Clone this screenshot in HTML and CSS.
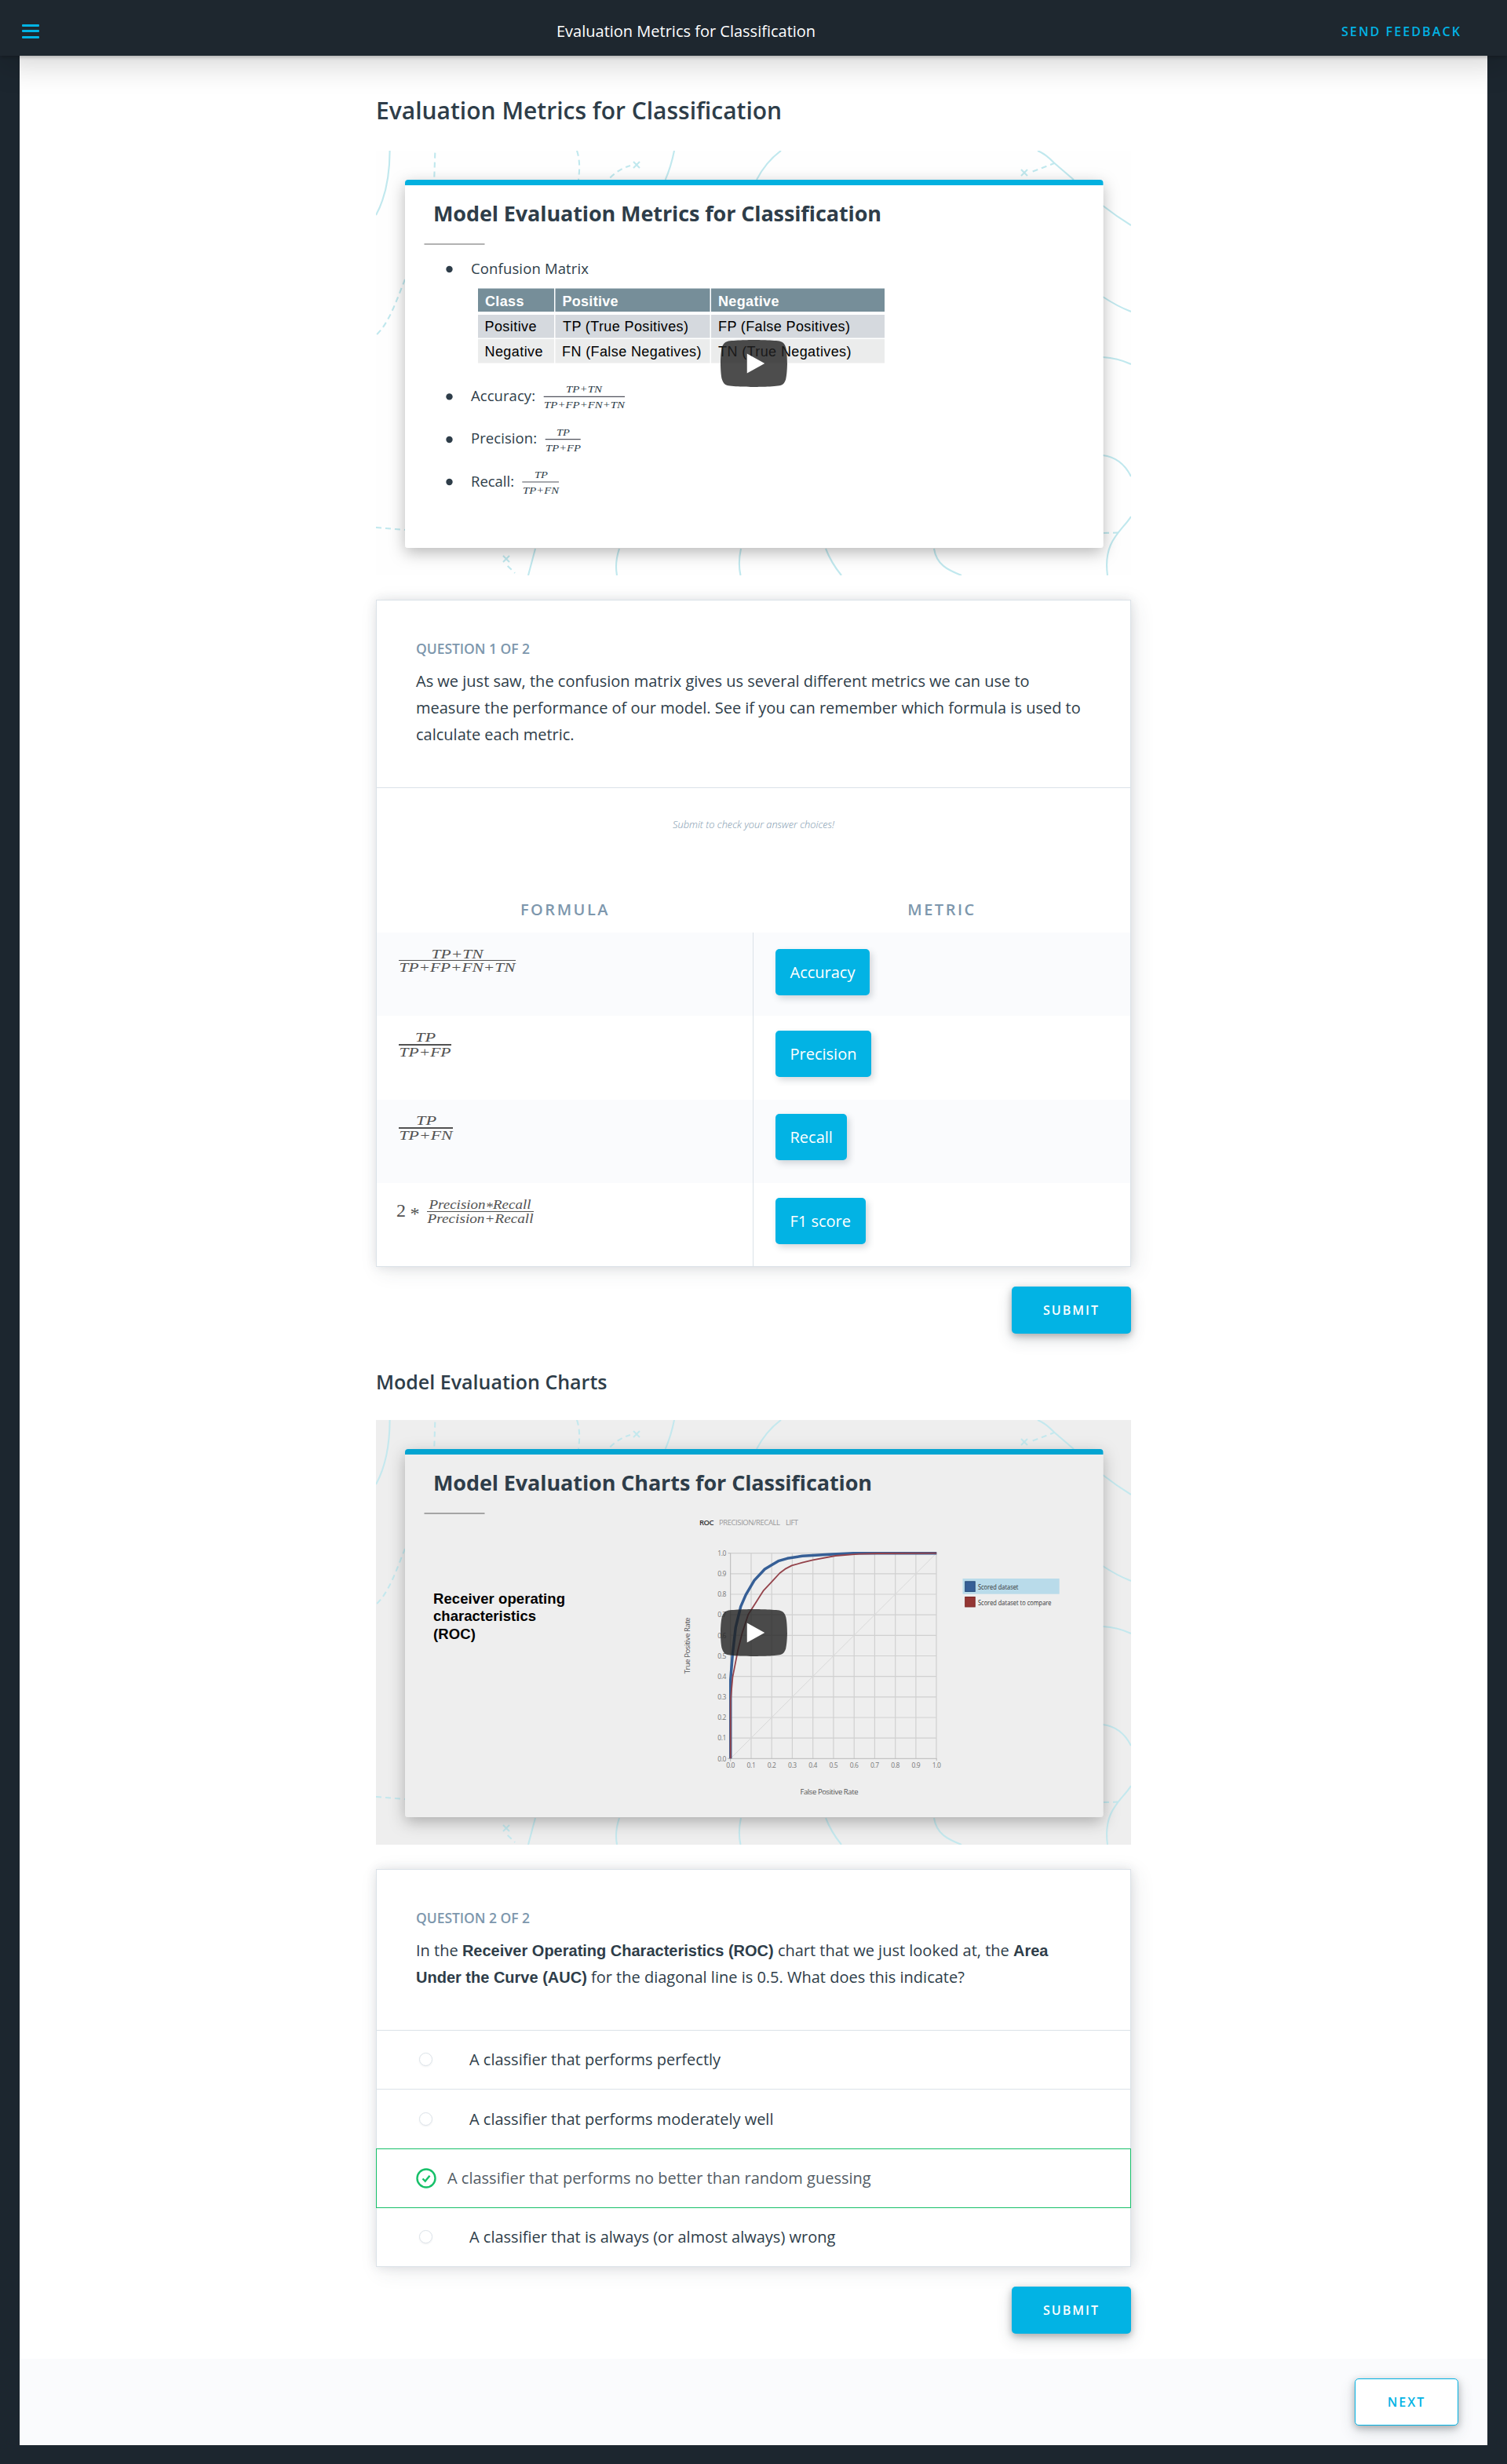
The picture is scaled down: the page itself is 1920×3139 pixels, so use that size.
FILE: index.html
```html
<!DOCTYPE html>
<html lang="en">
<head>
<meta charset="utf-8">
<title>Evaluation Metrics for Classification</title>
<link rel="stylesheet" href="styles.css">
</head>
<body>
<header class="topbar">
  <button class="menu" aria-label="Menu"><span></span><span></span><span></span></button>
  <div class="topbar-title">Evaluation Metrics for Classification</div>
  <a class="feedback">SEND FEEDBACK</a>
</header>

<svg class="defs" width="0" height="0" aria-hidden="true">
  <defs>
    <g id="map" fill="none" stroke="#c0e8ee" stroke-width="2.1">
      <path d="M17.6 0C17.5 33 12 60 0 82M380 0Q376 20 368.700 37M516 0Q497 14 485 37M843 0Q853 4 864 15.500L889 37M926 70Q944 84 962 95M926 186Q944 198 962 205M926 263Q945 264 962 272M926 388Q950 391 962 415M962 466C950 485 926 497 932 541M203 507L194 541M310 507Q304 525 307 541M465 507Q461 525 464.500 541M573 507Q580 525 593 541M711 507C714 527 728 534 746 541"/>
      <path stroke-dasharray="7 5" d="M75.300 2.600L74.300 34M256 0Q261 14 258 37M298.300 34.400Q310 23 324 19M836.700 26.600L864 16M37 164C27 188 17 220 0 235M0 480L37 483M167.700 529L177 538M927 487L948 486.600"/>
      <path d="M328 14l8 8m0-8l-8 8M822 24l8 8m0-8l-8 8M162 516l8 8m0-8l-8 8"/>
    </g>
    <g id="play">
      <path fill="#212121" fill-opacity=".8" d="M66.520 7.740c-.78-2.930-2.490-5.410-5.420-6.190C55.790.13 34 0 34 0S12.210.13 6.900 1.550C3.970 2.330 2.270 4.810 1.480 7.740.06 13.050 0 24 0 24s.06 10.950 1.480 16.260c.78 2.930 2.490 5.410 5.420 6.190C12.210 47.870 34 48 34 48s21.790-.13 27.100-1.550c2.930-.78 4.640-3.260 5.420-6.190C67.940 34.950 68 24 68 24s-.06-10.950-1.480-16.260z"/>
      <path fill="#fff" d="M45 24L27 14v20z"/>
    </g>
    <filter id="lift" x="-10%" y="-10%" width="120%" height="125%">
      <feDropShadow dx="0" dy="6" stdDeviation="10" flood-color="#000" flood-opacity=".28"/>
    </filter>
  </defs>
</svg>

<main class="page">
  <div class="content">
    <h1>Evaluation Metrics for Classification</h1>

    <svg class="video" viewBox="0 0 962 541">
      <rect width="962" height="541" fill="#fefefe"/>
      <use href="#map"/>
      <rect x="37" y="37" width="889.500" height="469" rx="4" fill="#fff" filter="url(#lift)"/>
      <path d="M37 44v-3q0-4 4-4h881.500q4 0 4 4v3z" fill="#03b0df"/>
      <text class="slide-title" x="73" y="89.500" textLength="571">Model Evaluation Metrics for Classification</text>
      <path d="M61.500 119h77" stroke="#999" stroke-width="1.600"/>
      <g fill="#2e3d49"><circle cx="93.500" cy="151" r="4.200"/><circle cx="93.500" cy="313.400" r="4.200"/><circle cx="93.500" cy="368" r="4.200"/><circle cx="93.500" cy="422" r="4.200"/></g>
      <g class="slide-text">
        <text x="121" y="156.600" textLength="150">Confusion Matrix</text>
        <text x="121" y="319" textLength="82">Accuracy:</text>
        <text x="121" y="373.400" textLength="84">Precision:</text>
        <text x="121" y="427.600" textLength="55">Recall:</text>
      </g>
      <path fill="#768e99" d="M130 175.500h97v29.500h-97zM228.500 175.500h197v29.500h-197zM427 175.500h221v29.500h-221z"/>
      <path fill="#d5d9de" d="M130 209h97v29.400h-97zM228.500 209h197v29.400h-197zM427 209h221v29.400h-221z"/>
      <path fill="#ebecec" d="M130 240h97v30.500h-97zM228.500 240h197v30.500h-197zM427 240h221v30.500h-221z"/>
      <g class="slide-table">
        <g font-weight="700" fill="#fff">
          <text x="139" y="197.500" textLength="49.500">Class</text>
          <text x="237.500" y="197.500" textLength="71">Positive</text>
          <text x="436" y="197.500" textLength="77.500">Negative</text>
        </g>
        <text x="138.500" y="229.800" textLength="66">Positive</text>
        <text x="238" y="229.800" textLength="160">TP (True Positives)</text>
        <text x="436" y="229.800" textLength="168">FP (False Positives)</text>
        <text x="138.500" y="261.800" textLength="74">Negative</text>
        <text x="237" y="261.800" textLength="177.500">FN (False Negatives)</text>
        <text x="436" y="261.800" textLength="169.500">TN (True Negatives)</text>
      </g>
      <g class="slide-math">
        <text x="242" y="308" textLength="46" lengthAdjust="spacingAndGlyphs">TP+TN</text><text x="214" y="328" textLength="103" lengthAdjust="spacingAndGlyphs">TP+FP+FN+TN</text>
        <text x="230" y="362.600" textLength="17" lengthAdjust="spacingAndGlyphs">TP</text><text x="216" y="382.600" textLength="45" lengthAdjust="spacingAndGlyphs">TP+FP</text>
        <text x="202" y="417" textLength="17" lengthAdjust="spacingAndGlyphs">TP</text><text x="187" y="437" textLength="46" lengthAdjust="spacingAndGlyphs">TP+FN</text>
      </g>
      <path stroke="#50525c" stroke-width="1.200" d="M213.700 313.400H317M215.700 367.600H260.700M186.300 422H233"/>
      <use href="#play" transform="translate(439 241) scale(1.25)"/>
    </svg>

    <section class="card">
      <div class="question">
        <h3>QUESTION 1 OF 2</h3>
        <p>As we just saw, the confusion matrix gives us several different metrics we can use to measure the performance of our model. See if you can remember which formula is used to calculate each metric.</p>
      </div>
      <p class="hint">Submit to check your answer choices!</p>
      <div class="match">
        <div class="match-head">FORMULA</div>
        <div class="match-head">METRIC</div>
        <div class="cell formula shade">
          <svg width="200" height="60" aria-label="Accuracy formula"><text x="59.500" y="22.500" textLength="66" lengthAdjust="spacingAndGlyphs">TP+TN</text><rect x="18" y="25" width="149" height="1"/><text x="18.500" y="40" textLength="148" lengthAdjust="spacingAndGlyphs">TP+FP+FN+TN</text></svg>
        </div>
        <div class="cell answer first shade"><span class="chip">Accuracy</span></div>
        <div class="cell formula tall">
          <svg width="200" height="60" aria-label="Precision formula"><text x="39" y="23" textLength="26" lengthAdjust="spacingAndGlyphs">TP</text><rect x="18" y="26" width="67" height="2"/><text x="18.500" y="42" textLength="66" lengthAdjust="spacingAndGlyphs">TP+FP</text></svg>
        </div>
        <div class="cell answer tall"><span class="chip">Precision</span></div>
        <div class="cell formula shade">
          <svg width="200" height="60" aria-label="Recall formula"><text x="40" y="22" textLength="26" lengthAdjust="spacingAndGlyphs">TP</text><rect x="18" y="25" width="69" height="2"/><text x="18.500" y="41" textLength="68" lengthAdjust="spacingAndGlyphs">TP+FN</text></svg>
        </div>
        <div class="cell answer raised shade"><span class="chip">Recall</span></div>
        <div class="cell formula">
          <svg width="220" height="60" aria-label="F1 formula"><text class="big" x="15" y="33">2</text><text class="big" x="32.500" y="37">*</text><text x="56.500" y="22.500" textLength="130" lengthAdjust="spacingAndGlyphs">Precision<tspan dy="3">*</tspan><tspan dy="-3">Recall</tspan></text><rect x="54" y="26" width="136" height="1"/><text x="54.500" y="41" textLength="135" lengthAdjust="spacingAndGlyphs">Precision+Recall</text></svg>
        </div>
        <div class="cell answer"><span class="chip">F1 score</span></div>
      </div>
    </section>
    <button class="btn">SUBMIT</button>

    <h2>Model Evaluation Charts</h2>

    <svg class="video" viewBox="0 0 962 541">
      <rect width="962" height="541" fill="#eee"/>
      <use href="#map" opacity=".9"/>
      <rect x="37" y="37" width="889.500" height="469" rx="4" fill="#eee" filter="url(#lift)"/>
      <path d="M37 44v-3q0-4 4-4h881.500q4 0 4 4v3z" fill="#04a4d1"/>
      <text class="slide-title" x="73" y="89.500" textLength="559">Model Evaluation Charts for Classification</text>
      <path d="M61.500 119h77" stroke="#8c8c8c" stroke-width="1.600"/>
      <g class="slide-label">
        <text x="73" y="233.500" textLength="168">Receiver operating</text>
        <text x="73" y="256" textLength="131">characteristics</text>
        <text x="73" y="278.500" textLength="54">(ROC)</text>
      </g>
      <g class="chart-text">
        <text x="412" y="134" textLength="18.500" fill="#333" font-weight="600">ROC</text>
        <text x="437" y="134" textLength="78" fill="#999">PRECISION/RECALL</text>
        <text x="522" y="134" textLength="16" fill="#999">LIFT</text>
        <text x="540.500" y="477.300" textLength="74">False Positive Rate</text>
        <text transform="translate(400 323.300) rotate(-90)" textLength="72">True Positive Rate</text>
      </g>
      <path fill="none" stroke="#d0d0d0" stroke-width="1.200" d="M451.700 169.700H714M451.700 195.900H714M451.700 222H714M451.700 248.200H714M451.700 274.300H714M451.700 300.500H714M451.700 326.700H714M451.700 352.800H714M451.700 379H714M451.700 405.100H714M478 169.700V431M504.200 169.700V431M530.400 169.700V431M556.700 169.700V431M582.900 169.700V431M609.200 169.700V431M635.400 169.700V431M661.700 169.700V431M687.900 169.700V431M714 169.700V431"/>
      <path fill="none" stroke="#d8d8d8" d="M451.700 431.300L714 169.700"/>
      <path fill="none" stroke="#b8b8b8" d="M448.500 169.700h3.200V431.300M448 431.300H714.200M714.200 431v3M451.700 431v4"/>
      <g class="chart-ticks" text-anchor="end">
        <text x="446" y="172.900">1.0</text><text x="446" y="199.100">0.9</text><text x="446" y="225.200">0.8</text><text x="446" y="251.400">0.7</text><text x="446" y="277.500">0.6</text><text x="446" y="303.700">0.5</text><text x="446" y="329.900">0.4</text><text x="446" y="356">0.3</text><text x="446" y="382.200">0.2</text><text x="446" y="408.300">0.1</text><text x="446" y="434.500">0.0</text>
      </g>
      <g class="chart-ticks" text-anchor="middle">
        <text x="451.700" y="443.300">0.0</text><text x="478" y="443.300">0.1</text><text x="504.200" y="443.300">0.2</text><text x="530.400" y="443.300">0.3</text><text x="556.700" y="443.300">0.4</text><text x="582.900" y="443.300">0.5</text><text x="609.200" y="443.300">0.6</text><text x="635.400" y="443.300">0.7</text><text x="661.700" y="443.300">0.8</text><text x="687.900" y="443.300">0.9</text><text x="714.200" y="443.300">1.0</text>
      </g>
      <g transform="translate(371 91) scale(.38266 .33333)" fill="none" stroke-linejoin="round">
        <path class="curve" stroke="#365f96" stroke-width="3.500" d="M211 1021L211 720L218 620L228 520L245 440L262 395L290 340L325 297L350 280L370 266L400 256L450 247L550 240L620 236L897 236"/>
        <path class="curve" stroke="#93424a" stroke-width="1.800" d="M211 1021L211 800L218 710L235 610L250 540L270 470L295 425L320 380L350 343L375 312L395 295L415 283L450 272L485 262L560 246L640 239L700 237L897 236"/>
      </g>
      <rect x="747.500" y="202" width="123.200" height="19.700" fill="#b9dbea"/>
      <rect x="750.700" y="205.800" width="12.500" height="12.700" fill="#365f96" stroke="#284c7b"/>
      <rect x="750.700" y="225.500" width="12.500" height="12.500" fill="#943634" stroke="#7c2826"/>
      <g class="chart-legend">
        <text x="767" y="216.200" textLength="51.500" lengthAdjust="spacingAndGlyphs">Scored dataset</text>
        <text x="767" y="235.900" textLength="93.500" lengthAdjust="spacingAndGlyphs">Scored dataset to compare</text>
      </g>
      <use href="#play" transform="translate(439 241) scale(1.25)"/>
    </svg>

    <section class="card">
      <div class="question">
        <h3>QUESTION 2 OF 2</h3>
        <p>In the <b>Receiver Operating Characteristics (ROC)</b> chart that we just looked at, the <b>Area Under the Curve (AUC)</b> for the diagonal line is 0.5. What does this indicate?</p>
      </div>
      <ul class="options">
        <li><i class="radio"></i>A classifier that performs perfectly</li>
        <li><i class="radio"></i>A classifier that performs moderately well</li>
        <li class="correct"><svg width="26" height="26" viewBox="0 0 26 26"><circle cx="13" cy="13" r="11.500"/><path d="M8.500 13.500l3.200 3.200 5.800-7"/></svg>A classifier that performs no better than random guessing</li>
        <li><i class="radio"></i>A classifier that is always (or almost always) wrong</li>
      </ul>
    </section>
    <button class="btn">SUBMIT</button>
  </div>
  <footer class="pager"><button class="btn outline">NEXT</button></footer>
</main>
</body>
</html>
```

FILE: styles.css
```css
* { box-sizing: border-box; }
body {
  margin: 0;
  background: #1c262f;
  color: #2e3d49;
  font-family: "Open Sans", sans-serif;
  font-size: 20px;
}
h1, h2, h3, p, ul { margin: 0; padding: 0; }
button { font-family: inherit; border: 0; cursor: pointer; }
.defs { display: block; }

.topbar {
  position: relative;
  z-index: 1;
  display: grid;
  grid-template-columns: 681px 1fr auto;
  align-items: center;
  height: 71px;
  padding: 8px 58px 0 28px;
  background: #1e272f;
  box-shadow: 0 2px 4px rgba(0,0,0,.2), 0 10px 40px rgba(0,0,0,.18);
}
.menu {
  display: flex;
  flex-direction: column;
  justify-content: space-between;
  width: 22px;
  height: 18px;
  padding: 0;
  background: none;
}
.menu span { height: 3px; border-radius: 1px; background: #02b3e4; }
.topbar-title { color: #fff; }
.feedback { color: #02b3e4; font-size: 16px; font-weight: 600; letter-spacing: 2.1px; }

.page {
  display: flex;
  flex-direction: column;
  width: 1870px;
  height: 3044px;
  margin: 0 auto 24px;
  background: #fff;
}
.content {
  display: flex;
  flex: 1;
  flex-direction: column;
  width: 962px;
  margin-left: 454px;
  padding-top: 50px;
}
h1 { height: 40px; font-size: 30px; line-height: 40px; font-weight: 600; }
h2 { height: 34px; margin-top: 45px; font-size: 25px; line-height: 32px; font-weight: 600; }
.video { display: block; width: 962px; height: 541px; margin: 31px 0; }

.slide-title { font-size: 27px; font-weight: 700; fill: #2e3d49; }
.slide-text { font-size: 18.5px; fill: #2e3d49; }
.slide-table { font-family: "Liberation Sans", sans-serif; font-size: 18px; }
.slide-math { font-family: "Liberation Serif", serif; font-style: italic; font-size: 12.5px; fill: #2e3d49; }
.slide-label { font-family: "Liberation Sans", sans-serif; font-size: 18.5px; font-weight: 700; }
.chart-text { font-size: 9.5px; fill: #555; }
.chart-ticks { font-size: 8.5px; letter-spacing: -.4px; fill: #777; }
.chart-legend { font-size: 8.5px; fill: #333; }
.curve { vector-effect: non-scaling-stroke; }

.card {
  border: 1px solid #dbe2e8;
  background: #fff;
  box-shadow: 5px 5px 25px rgba(46,61,73,.1), 0 0 12px rgba(46,61,73,.12);
}
.question { padding: 49px 50px 50px; border-bottom: 1px solid #dbe2e8; }
.question h3 {
  margin-bottom: 13px;
  color: #7d97ad;
  font-size: 17.5px;
  line-height: 24px;
  font-weight: 600;
  letter-spacing: -.05px;
}
.question p { line-height: 34px; }
.question b { font-family: "Liberation Sans", sans-serif; }
.hint {
  padding: 37px 0 83px;
  color: #7d97ad;
  font-size: 12.8px;
  line-height: 19px;
  height: 140px;
  font-style: italic;
  font-weight: 300;
  text-align: center;
}
.match { display: grid; grid-template-columns: 480px 480px; }
.match-head {
  padding-bottom: 14px;
  color: #7d97ad;
  font-weight: 600;
  line-height: 30px;
  letter-spacing: 2.5px;
  text-align: center;
}
.cell { height: 106px; padding: 10px; }
.cell.tall { height: 107px; }
.shade { background: #fafbfd; }
.formula {
  border-right: 1px solid #dbe2e8;
  font-family: "Liberation Serif", serif;
  font-size: 17.5px;
  font-style: italic;
  fill: #525252;
}
.formula svg { display: block; }
.big { font-size: 24px; font-style: normal; }
.answer { display: flex; align-items: flex-start; padding: 19px 28px; }
.answer.first { padding-top: 21px; }
.answer.raised { padding-top: 18px; }
.chip {
  padding: 0 18.5px;
  border-radius: 5px;
  background: #02b3e4;
  color: #fff;
  line-height: 59px;
  box-shadow: 3px 4px 8px rgba(46,61,73,.2);
}

.btn {
  flex: none;
  align-self: flex-end;
  width: 152px;
  height: 60px;
  margin-top: 25px;
  padding: 0;
  border-radius: 5px;
  background: #02b3e4;
  color: #fff;
  font-size: 16px;
  font-weight: 600;
  letter-spacing: 2px;
  box-shadow: 0 8px 20px rgba(46,61,73,.16), 0 3px 10px rgba(0,0,0,.28);
}
.options { list-style: none; }
.options li {
  display: flex;
  align-items: center;
  height: 76px;
  padding: 0 0 1px 54px;
  border-bottom: 1px solid #dbe2e8;
}
.options li:first-child { height: 75px; }
.options li:last-child { height: 74px; border: 0; }
.radio {
  width: 17px;
  height: 17px;
  margin-right: 47px;
  border: 1px solid #dbe2e8;
  border-radius: 50%;
  box-shadow: 0 1px 2px rgba(46,61,73,.08);
}
.options .correct {
  margin: -1px -1px 0;
  padding-left: 50px;
  border: 1px solid #17c069;
  color: #525c65;
}
.correct svg { margin-right: 14px; fill: none; stroke: #17c069; stroke-width: 2.4; }

.pager {
  display: flex;
  justify-content: flex-end;
  height: 110px;
  padding: 0 37px;
  background: #fafbfd;
}
.pager .btn { align-self: flex-start; }
.outline { width: 132px; border: 1px solid #02b3e4; background: #fff; color: #02b3e4; }
```
